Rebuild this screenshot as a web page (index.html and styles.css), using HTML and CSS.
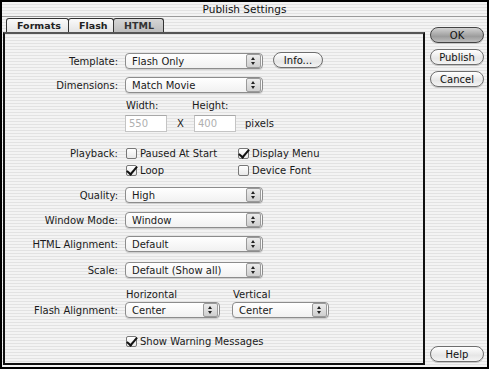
FILE: index.html
```html
<!DOCTYPE html>
<html lang="en">
<head>
  <meta charset="UTF-8" />
  <title>Publish Settings</title>
  <link rel="stylesheet" href="styles.css">
</head>
<body>

<div class="window">
  <div class="titlebar">Publish Settings</div>

  <div class="main">
    <div class="left">
      <div class="tabs">
        <div class="tab tab-formats">Formats</div>
        <div class="tab tab-flash">Flash</div>
        <div class="tab tab-html active">HTML</div>
      </div>

      <div class="panel">
        <div class="row r-template">
          <div class="label">Template:</div>
          <div class="select w-wide"><span class="val">Flash Only</span><span class="arrows"></span></div>
          <button class="btn info">Info...</button>
        </div>

        <div class="row r-dims">
          <div class="label">Dimensions:</div>
          <div class="select w-wide"><span class="val">Match Movie</span><span class="arrows"></span></div>
        </div>

        <div class="row small r-whlabels">
          <div class="label"></div>
          <div class="cap cap-w">Width:</div>
          <div class="cap">Height:</div>
        </div>

        <div class="row r-inputs">
          <div class="label"></div>
          <div class="field">550</div>
          <div class="times">X</div>
          <div class="field">400</div>
          <div class="unit">pixels</div>
        </div>

        <div class="row check-row r-play1">
          <div class="label">Playback:</div>
          <div class="check col1"><span class="box"></span>Paused At Start</div>
          <div class="check"><span class="box on"></span>Display Menu</div>
        </div>

        <div class="row check-row r-play2">
          <div class="label"></div>
          <div class="check col1"><span class="box on"></span>Loop</div>
          <div class="check"><span class="box"></span>Device Font</div>
        </div>

        <div class="row r-quality">
          <div class="label">Quality:</div>
          <div class="select w-wide"><span class="val">High</span><span class="arrows"></span></div>
        </div>

        <div class="row r-mode">
          <div class="label">Window Mode:</div>
          <div class="select w-wide"><span class="val">Window</span><span class="arrows"></span></div>
        </div>

        <div class="row r-align">
          <div class="label">HTML Alignment:</div>
          <div class="select w-wide"><span class="val">Default</span><span class="arrows"></span></div>
        </div>

        <div class="row r-scale">
          <div class="label">Scale:</div>
          <div class="select w-wide"><span class="val">Default (Show all)</span><span class="arrows"></span></div>
        </div>

        <div class="row small r-hvlabels">
          <div class="label"></div>
          <div class="cap cap-h">Horizontal</div>
          <div class="cap">Vertical</div>
        </div>

        <div class="row r-flash">
          <div class="label">Flash Alignment:</div>
          <div class="select w-h"><span class="val">Center</span><span class="arrows"></span></div>
          <div class="select w-v"><span class="val">Center</span><span class="arrows"></span></div>
        </div>

        <div class="row check-row r-warn">
          <div class="label"></div>
          <div class="check"><span class="box on"></span>Show Warning Messages</div>
        </div>
      </div>
    </div>

    <div class="side">
      <button class="btn side-btn default">OK</button>
      <button class="btn side-btn">Publish</button>
      <button class="btn side-btn">Cancel</button>
      <div class="spacer"></div>
      <button class="btn side-btn last">Help</button>
    </div>
  </div>
</div>

</body>
</html>
```

FILE: styles.css
```css
body {
  margin: 0;
  padding: 0;
  font-family: "DejaVu Sans", "Open Sans", sans-serif;
  font-size: 10px;
  color: #1a1a1a;
}

.window {
  width: 489px;
  height: 369px;
  box-sizing: border-box;
  border: 2px solid #000;
  background: repeating-linear-gradient(180deg, #f3f3f3 0px, #f3f3f3 2px, #e2e2e2 2px, #e2e2e2 3px);
  display: flex;
  flex-direction: column;
}

.titlebar {
  height: 14px;
  line-height: 14px;
  text-align: center;
  font-size: 10.5px;
  color: #111;
  border-bottom: 1px solid #9a9a9a;
}

.main {
  flex: 1;
  display: flex;
}

.left {
  width: 422px;
  margin-left: 1px;
  display: flex;
  flex-direction: column;
}

/* tabs */
.tabs {
  display: flex;
  height: 14px;
  margin-top: 1px;
  padding-left: 3px;
}

.tab {
  height: 14px;
  box-sizing: border-box;
  padding-left: 10px;
  line-height: 13px;
  font-weight: bold;
  font-size: 9.5px;
  color: #222;
  border: 1px solid #333;
  border-bottom: none;
  border-radius: 3px 3px 0 0;
  background: linear-gradient(#fafafa, #e4e4e4);
  margin-right: -1px;
  white-space: nowrap;
  overflow: hidden;
}

.tab-formats { width: 63px; }
.tab-flash { width: 46px; }
.tab-html { width: 51px; }

.tab.active {
  background: linear-gradient(#d6d6d6, #bdbdbd);
  color: #333;
}

.panel {
  flex: 1;
  margin-bottom: 2px;
  border: 2px solid #111;
  border-top: 2px solid #555;
  display: flex;
  flex-direction: column;
}

/* form rows */
.row {
  display: flex;
  align-items: center;
  height: 16px;
}

.row.small {
  height: 12px;
}

.check-row {
  height: 13px;
}

.label {
  width: 113px;
  flex: none;
  margin-right: 7px;
  text-align: right;
  white-space: nowrap;
}

.r-template { margin-top: 19px; }
.r-dims { margin-top: 8px; }
.r-whlabels { margin-top: 6px; }
.r-inputs { margin-top: 4px; height: 17px; }
.r-play1 { margin-top: 15px; }
.r-play2 { margin-top: 4px; }
.r-quality { margin-top: 10px; }
.r-mode { margin-top: 9px; }
.r-align { margin-top: 8px; }
.r-scale { margin-top: 10px; }
.r-hvlabels { margin-top: 10px; }
.r-flash { margin-top: 2px; }
.r-warn { margin-top: 17px; }

/* popup menus */
.select {
  height: 16px;
  box-sizing: border-box;
  border: 1px solid #8c8c8c;
  border-radius: 4px;
  background: linear-gradient(#ffffff, #f1f1f1);
  display: flex;
  align-items: center;
  box-shadow: 0 1px 0 #d0d0d0;
}

.select .val {
  flex: 1;
  padding-left: 6px;
  white-space: nowrap;
}

.select .arrows {
  width: 13px;
  height: 12px;
  margin-right: 1px;
  border: 1px solid #9a9a9a;
  border-radius: 2px;
  background: linear-gradient(#ececec, #cfcfcf);
  position: relative;
}

.select .arrows::before,
.select .arrows::after {
  content: "";
  position: absolute;
  left: 4px;
  border-left: 2.5px solid transparent;
  border-right: 2.5px solid transparent;
}

.select .arrows::before {
  top: 2px;
  border-bottom: 3px solid #222;
}

.select .arrows::after {
  bottom: 2px;
  border-top: 3px solid #222;
}

.w-wide { width: 138px; }
.w-h { width: 95px; }
.w-v { width: 97px; margin-left: 12px; }

/* buttons */
.btn {
  font-family: inherit;
  font-size: 10px;
  color: #111;
  height: 16px;
  box-sizing: border-box;
  padding: 0;
  border: 1px solid #6e6e6e;
  border-radius: 8px;
  background: linear-gradient(#ffffff, #e6e6e6 60%, #f4f4f4);
  box-shadow: 0 1px 0 #c4c4c4;
}

.info {
  width: 50px;
  margin-left: 10px;
  margin-top: -2px;
}

.side {
  width: 54px;
  margin-left: 5px;
  display: flex;
  flex-direction: column;
  padding-top: 10px;
  padding-bottom: 5px;
}

.side-btn {
  width: 54px;
  margin-bottom: 6px;
}

.side-btn.last {
  margin-bottom: 0;
}

.side-btn.default {
  background: linear-gradient(#d2d2d2, #9c9c9c 60%, #bdbdbd);
  border-color: #444;
}

.spacer {
  flex: 1;
}

/* size fields */
.cap {
  white-space: nowrap;
}

.cap-w {
  width: 66px;
  padding-left: 1px;
}

.cap-h {
  width: 107px;
  padding-left: 1px;
}

.field {
  width: 42px;
  height: 17px;
  box-sizing: border-box;
  border: 1px solid #c4c4c4;
  border-top-color: #a8a8a8;
  background: #fff;
  color: #b0b0b0;
  padding-left: 3px;
  line-height: 15px;
}

.times {
  width: 27px;
  text-align: center;
}

.unit {
  margin-left: 9px;
}

/* checkboxes */
.check {
  display: flex;
  align-items: center;
  white-space: nowrap;
}

.check.col1 {
  width: 112px;
}

.box {
  width: 11px;
  height: 11px;
  box-sizing: border-box;
  border: 1px solid #777;
  border-radius: 2px;
  background: linear-gradient(#ffffff, #e8e8e8);
  margin-left: 1px;
  margin-right: 3px;
  position: relative;
}

.box.on::after {
  content: "";
  position: absolute;
  left: 2px;
  top: -2px;
  width: 4px;
  height: 9px;
  border-right: 2.5px solid #111;
  border-bottom: 2.5px solid #111;
  transform: rotate(40deg);
  transform-origin: 50% 50%;
}
```
